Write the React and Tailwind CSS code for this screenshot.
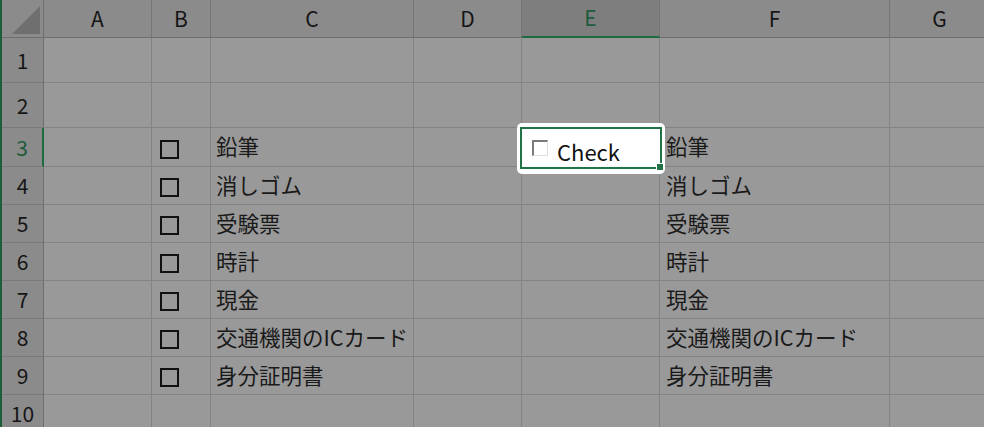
import React from 'react';

// 持ち物チェックリスト（Excel風シート）
const cols = ['A', 'B', 'C', 'D', 'E', 'F', 'G'];
const items = ['鉛筆', '消しゴム', '受験票', '時計', '現金', '交通機関のICカード', '身分証明書'];

const font = { fontFamily: '"Noto Sans CJK JP", "Noto Sans", sans-serif' };

function HeaderCell({ label, active }) {
  return (
    <div
      className={
        active
          ? 'flex items-center justify-center bg-[#7e7e7e] border-r border-[#767676] border-b-2 border-b-[#1e6b41] text-[#1e5b3a] text-[21px]'
          : 'flex items-center justify-center bg-[#8b8b8b] border-r border-[#767676] border-b border-b-[#6e6e6e] text-[#151515] text-[21px]'
      }
    >
      {label}
    </div>
  );
}

function RowHead({ n, active }) {
  return (
    <div
      className={
        active
          ? 'flex items-center justify-center bg-[#8b8b8b] border-b border-[#7a7a7a] border-r-2 border-r-[#1e6b41] text-[#1e5b3a] text-[21px] leading-none'
          : 'flex items-center justify-center bg-[#8b8b8b] border-b border-[#7a7a7a] border-r border-r-[#6e6e6e] text-[#151515] text-[21px] leading-none'
      }
    >
      {n}
    </div>
  );
}

function Cell({ children, className = '' }) {
  return (
    <div className={'flex items-center pb-[2px] bg-[#999999] border-r border-b border-[#838383] text-[#1a1a1a] text-[21.5px] leading-none whitespace-nowrap overflow-visible ' + className}>
      {children}
    </div>
  );
}

function Box() {
  return <div className="ml-[8px] mt-[6px] w-[19px] h-[19px] border-2 border-[#111]" />;
}

export default function App() {
  const rows = [];
  for (let r = 1; r <= 10; r++) {
    const item = r >= 3 && r <= 9 ? items[r - 3] : null;
    rows.push(
      <React.Fragment key={r}>
        <RowHead n={r} active={r === 3} />
        <Cell />
        <Cell>{item && <Box />}</Cell>
        <Cell className="pl-[5px]">{item}</Cell>
        <Cell />
        <Cell />
        <Cell className="pl-[6px]">{item}</Cell>
        <Cell />
      </React.Fragment>
    );
  }

  return (
    <div className="relative w-[984px] h-[427px] overflow-hidden flex bg-[#999999]" style={font}>
      <div className="w-[2px] shrink-0 bg-[#1d5e3a]" />
      <div className="flex flex-col">
        <div className="h-px bg-[#a4a4a4]" />
        <div className="grid grid-cols-[42px_108px_59px_203px_108px_138px_230px_100px] grid-rows-[38px_45px_45px_39px_38px_38px_38px_38px_38px_38px_38px]">
          <div className="flex items-end justify-end pr-[3px] pb-[3px] bg-[#8b8b8b] border-r border-[#6e6e6e] border-b border-b-[#6e6e6e]">
            <svg width="28" height="28" viewBox="0 0 28 28">
              <polygon points="28,0 28,28 0,28" fill="#6f6f6f" />
            </svg>
          </div>
          {cols.map((c) => (
            <HeaderCell key={c} label={c} active={c === 'E'} />
          ))}
          {rows}
        </div>
      </div>

      {/* E3 の選択枠とチェックボックス */}
      <div className="absolute left-[517px] top-[123px] w-[148px] h-[51px] rounded-[5px] bg-white">
        <div className="absolute left-[3px] top-[4px] w-[142px] h-[42px] border-2 border-[#217346]" />
        <div className="absolute left-[139px] top-[40px] w-[8px] h-[8px] bg-white flex items-center justify-center">
          <div className="w-[6px] h-[6px] bg-[#217346]" />
        </div>
        <div className="absolute left-[15px] top-[17px] w-[16px] h-[16px] border-t-2 border-l-2 border-t-[#7a7a7a] border-l-[#7a7a7a] border-r border-b border-r-[#dedede] border-b-[#dedede] bg-white" />
        <div className="absolute left-[40px] top-[17px] text-[22px] leading-none text-[#111]">Check</div>
      </div>
    </div>
  );
}
